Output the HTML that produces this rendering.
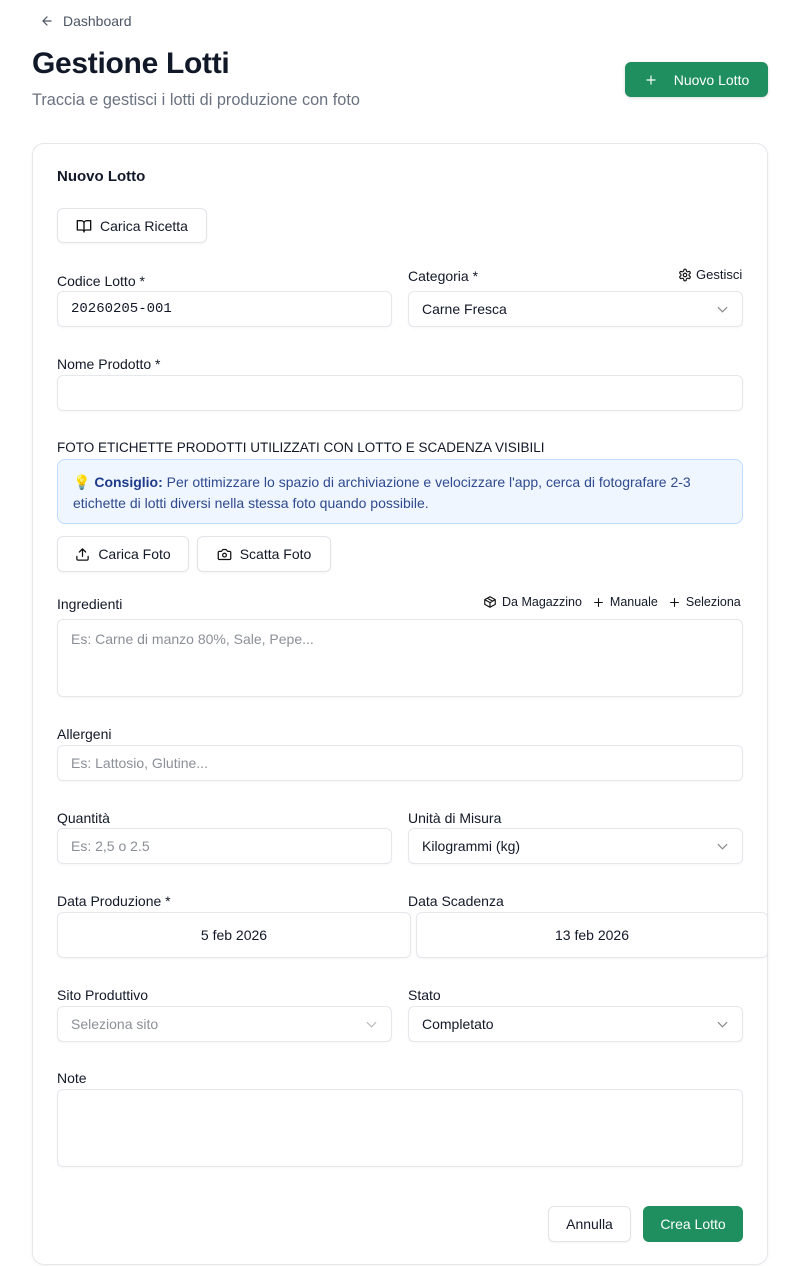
<!DOCTYPE html>
<html><head><meta charset="utf-8"><style>
*{box-sizing:border-box;margin:0;padding:0}
html,body{width:800px;height:1266px;overflow:hidden}
body{background:#fff;font-family:"Liberation Sans",sans-serif;color:#111827;position:relative}
.a{position:absolute}
.lbl{position:absolute;font-size:14px;color:#111827;line-height:16px}
.in{position:absolute;border:1px solid #e5e7eb;border-radius:6px;background:#fff;font-size:14px;padding-left:13px;display:flex;align-items:center;box-shadow:0 1px 2px rgba(0,0,0,.04)}
.ph{color:#8b8f97}
.btn{position:absolute;border:1px solid #e2e4e8;border-radius:6px;background:#fff;font-size:14px;display:flex;align-items:center;justify-content:center;gap:8px;box-shadow:0 1px 2px rgba(0,0,0,.05)}
.chev{position:absolute;right:14px;top:50%;margin-top:-5px}
svg{display:block}
</style></head><body>
<div class="a" style="left:40px;top:13px;font-size:14px;color:#4b5563;display:flex;align-items:center;gap:9px">
<svg width="14" height="14" viewBox="0 0 24 24" fill="none" stroke="#4b5563" stroke-width="2" stroke-linecap="round" stroke-linejoin="round"><path d="M19 12H5M12 19l-7-7 7-7"/></svg>Dashboard</div>
<div class="a" style="left:32px;top:47px;font-size:30px;font-weight:bold;letter-spacing:-.3px">Gestione Lotti</div>
<div class="a" style="left:32px;top:91px;font-size:16.3px;color:#6b7280">Traccia e gestisci i lotti di produzione con foto</div>
<div class="a" style="left:625px;top:62px;width:143px;height:35px;background:#1f8f60;border-radius:6px;color:#fff;font-size:14px;display:flex;align-items:center;justify-content:center;gap:16px;box-shadow:0 1px 3px rgba(0,0,0,.15)">
<svg width="14" height="14" viewBox="0 0 24 24" fill="none" stroke="#fff" stroke-width="2" stroke-linecap="round"><path d="M12 5v14M5 12h14"/></svg>Nuovo Lotto</div>

<div class="a" style="left:32px;top:143px;width:736px;height:1122px;border:1px solid #e5e7eb;border-radius:12px;box-shadow:0 1px 3px rgba(0,0,0,.05)"></div>
<div class="a" style="left:57px;top:168px;font-size:15px;font-weight:bold">Nuovo Lotto</div>
<div class="btn" style="left:57px;top:208px;width:150px;height:35px">
<svg width="16" height="16" viewBox="0 0 24 24" fill="none" stroke="#111" stroke-width="2" stroke-linejoin="round"><path d="M2 4h6a4 4 0 0 1 4 4v13a3 3 0 0 0-3-3H2zM22 4h-6a4 4 0 0 0-4 4v13a3 3 0 0 1 3-3h7z"/></svg>Carica Ricetta</div>

<div class="lbl" style="left:57px;top:273px">Codice Lotto *</div>
<div class="in" style="left:57px;top:291px;width:335px;height:36px;font-family:'Liberation Mono',monospace;font-size:14px">20260205-001</div>
<div class="lbl" style="left:408px;top:268px">Categoria *</div>
<div class="a" style="left:678px;top:267px;font-size:13px;display:flex;align-items:center;gap:4px">
<svg width="14" height="14" viewBox="0 0 24 24" fill="none" stroke="#111" stroke-width="2"><circle cx="12" cy="12" r="3"/><path d="M12.2 2h-.4a2 2 0 0 0-2 2v.2a2 2 0 0 1-1 1.7l-.4.3a2 2 0 0 1-2 0l-.2-.1a2 2 0 0 0-2.7.7l-.2.4a2 2 0 0 0 .7 2.7l.2.1a2 2 0 0 1 1 1.7v.5a2 2 0 0 1-1 1.7l-.2.1a2 2 0 0 0-.7 2.7l.2.4a2 2 0 0 0 2.7.7l.2-.1a2 2 0 0 1 2 0l.4.3a2 2 0 0 1 1 1.7v.2a2 2 0 0 0 2 2h.4a2 2 0 0 0 2-2v-.2a2 2 0 0 1 1-1.7l.4-.3a2 2 0 0 1 2 0l.2.1a2 2 0 0 0 2.7-.7l.2-.4a2 2 0 0 0-.7-2.7l-.2-.1a2 2 0 0 1-1-1.7v-.5a2 2 0 0 1 1-1.7l.2-.1a2 2 0 0 0 .7-2.7l-.2-.4a2 2 0 0 0-2.7-.7l-.2.1a2 2 0 0 1-2 0l-.4-.3a2 2 0 0 1-1-1.7V4a2 2 0 0 0-2-2z"/></svg>Gestisci</div>
<div class="in" style="left:408px;top:291px;width:335px;height:36px">Carne Fresca<svg class="chev" width="11" height="10" viewBox="0 0 12 8" fill="none" stroke="#888" stroke-width="1.3"><path d="M1 2l5 5 5-5"/></svg></div>

<div class="lbl" style="left:57px;top:356px">Nome Prodotto *</div>
<div class="in" style="left:57px;top:375px;width:686px;height:36px"></div>

<div class="lbl" style="left:57px;top:440px;font-size:13.5px">FOTO ETICHETTE PRODOTTI UTILIZZATI CON LOTTO E SCADENZA VISIBILI</div>
<div class="a" style="left:57px;top:459px;width:686px;height:65px;background:#eff6ff;border:1px solid #bfdbfe;border-radius:8px;padding:12px 12px 0 15px;font-size:14px;line-height:21px;color:#2f4a8f">💡 <b style="color:#1e3a8a">Consiglio:</b> Per ottimizzare lo spazio di archiviazione e velocizzare l'app, cerca di fotografare 2-3 etichette di lotti diversi nella stessa foto quando possibile.</div>

<div class="btn" style="left:57px;top:536px;width:132px;height:36px">
<svg width="15" height="15" viewBox="0 0 24 24" fill="none" stroke="#111" stroke-width="2" stroke-linecap="round" stroke-linejoin="round"><path d="M21 15v4a2 2 0 0 1-2 2H5a2 2 0 0 1-2-2v-4M17 8l-5-5-5 5M12 3v12"/></svg>Carica Foto</div>
<div class="btn" style="left:197px;top:536px;width:134px;height:36px">
<svg width="15" height="15" viewBox="0 0 24 24" fill="none" stroke="#111" stroke-width="2" stroke-linejoin="round"><path d="M14.5 4h-5L7 7H4a2 2 0 0 0-2 2v9a2 2 0 0 0 2 2h16a2 2 0 0 0 2-2V9a2 2 0 0 0-2-2h-3z"/><circle cx="12" cy="13" r="3"/></svg>Scatta Foto</div>

<div class="lbl" style="left:57px;top:596px">Ingredienti</div>
<div class="a" style="left:483px;top:595px;font-size:12.5px;display:flex;align-items:center;gap:5px">
<svg width="14" height="14" viewBox="0 0 24 24" fill="none" stroke="#111" stroke-width="2" stroke-linejoin="round"><path d="M21 8 12 3 3 8v8l9 5 9-5zM3 8l9 5 9-5M12 13v8M7.5 5.5l9 5"/></svg>Da Magazzino
<svg style="margin-left:5px" width="13" height="13" viewBox="0 0 24 24" fill="none" stroke="#111" stroke-width="2"><path d="M12 4v16M4 12h16"/></svg>Manuale
<svg style="margin-left:5px" width="13" height="13" viewBox="0 0 24 24" fill="none" stroke="#111" stroke-width="2"><path d="M12 4v16M4 12h16"/></svg>Seleziona</div>
<div class="in ph" style="left:57px;top:619px;width:686px;height:78px;align-items:flex-start;padding-top:11px">Es: Carne di manzo 80%, Sale, Pepe...</div>

<div class="lbl" style="left:57px;top:726px">Allergeni</div>
<div class="in ph" style="left:57px;top:745px;width:686px;height:36px">Es: Lattosio, Glutine...</div>

<div class="lbl" style="left:57px;top:810px">Quantità</div>
<div class="in ph" style="left:57px;top:828px;width:335px;height:36px">Es: 2,5 o 2.5</div>
<div class="lbl" style="left:408px;top:810px">Unità di Misura</div>
<div class="in" style="left:408px;top:828px;width:335px;height:36px">Kilogrammi (kg)<svg class="chev" width="11" height="10" viewBox="0 0 12 8" fill="none" stroke="#888" stroke-width="1.3"><path d="M1 2l5 5 5-5"/></svg></div>

<div class="lbl" style="left:57px;top:893px">Data Produzione *</div>
<div class="in" style="left:57px;top:912px;width:354px;height:46px;justify-content:center;padding:0">5 feb 2026</div>
<div class="lbl" style="left:408px;top:893px">Data Scadenza</div>
<div class="in" style="left:416px;top:912px;width:352px;height:46px;justify-content:center;padding:0">13 feb 2026</div>

<div class="lbl" style="left:57px;top:987px">Sito Produttivo</div>
<div class="in ph" style="left:57px;top:1006px;width:335px;height:36px">Seleziona sito<svg class="chev" width="11" height="10" viewBox="0 0 12 8" fill="none" stroke="#bbb" stroke-width="1.3"><path d="M1 2l5 5 5-5"/></svg></div>
<div class="lbl" style="left:408px;top:987px">Stato</div>
<div class="in" style="left:408px;top:1006px;width:335px;height:36px">Completato<svg class="chev" width="11" height="10" viewBox="0 0 12 8" fill="none" stroke="#888" stroke-width="1.3"><path d="M1 2l5 5 5-5"/></svg></div>

<div class="lbl" style="left:57px;top:1070px">Note</div>
<div class="in" style="left:57px;top:1089px;width:686px;height:78px"></div>

<div class="btn" style="left:548px;top:1206px;width:83px;height:36px">Annulla</div>
<div class="a" style="left:643px;top:1206px;width:100px;height:36px;background:#1f8f60;border-radius:6px;color:#fff;font-size:14px;display:flex;align-items:center;justify-content:center">Crea Lotto</div>
</body></html>
